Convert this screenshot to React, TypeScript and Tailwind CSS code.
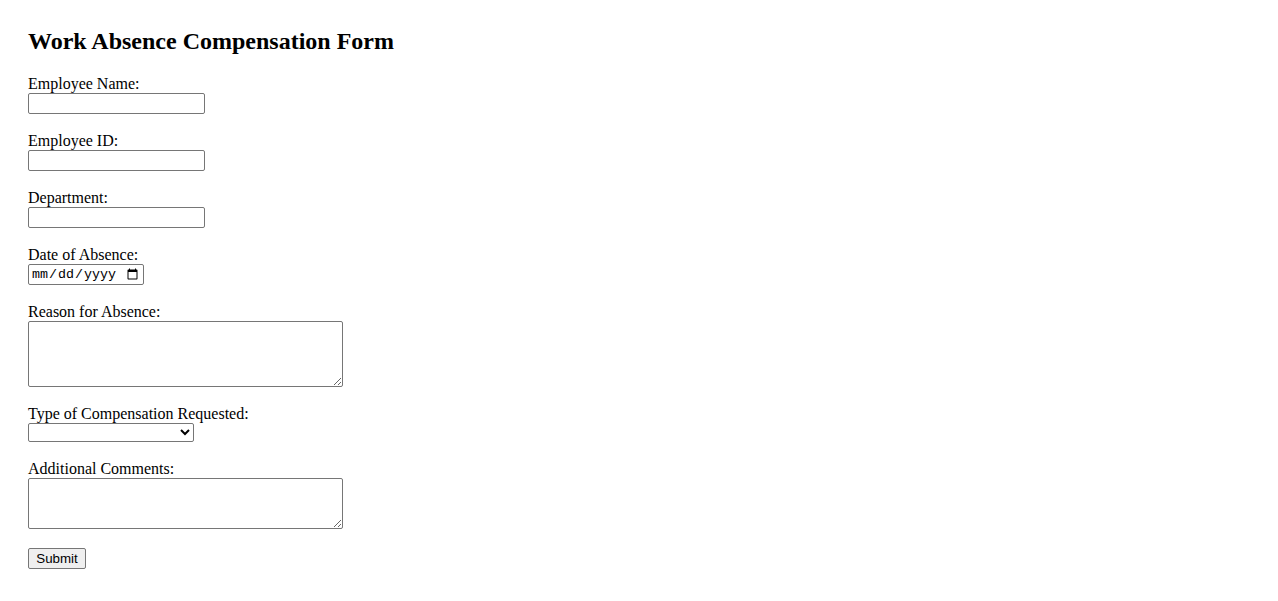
import React from "react";

const fieldBox =
  "block border border-[#767676] rounded-[2px] bg-white px-[2px] py-[1px] text-[13.33px] font-['Liberation_Sans',Arial,sans-serif] text-black outline-none";

function Field({ label, children }: { label: string; children: React.ReactNode }) {
  return (
    <div className="flex flex-col items-start">
      <label className="block h-[17px] leading-[16px] text-[16px]">{label}</label>
      {children}
    </div>
  );
}

export default function App() {
  return (
    <div className="min-h-screen bg-white text-black font-['Liberation_Serif','Times_New_Roman',serif] px-[28px] pt-[27px] pb-8">
      <h2 className="text-[24px] font-bold leading-[28px]">Work Absence Compensation Form</h2>
      <form className="mt-[21px] flex flex-col gap-[19px]" onSubmit={(e) => e.preventDefault()}>
        <Field label="Employee Name:">
          <input type="text" className={`${fieldBox} w-[177px] h-[21px]`} />
        </Field>
        <Field label="Employee ID:">
          <input type="text" className={`${fieldBox} w-[177px] h-[21px]`} />
        </Field>
        <Field label="Department:">
          <input type="text" className={`${fieldBox} w-[177px] h-[21px]`} />
        </Field>
        <Field label="Date of Absence:">
          <input
            type="date"
            className="block w-[116px] h-[21px] border border-[#767676] rounded-[2px] bg-white px-[2px] py-[1px] text-[13.33px] font-['Liberation_Mono',monospace] text-black outline-none"
          />
        </Field>
        <Field label="Reason for Absence:">
          <textarea className={`${fieldBox} w-[315px] h-[66px]`} />
        </Field>
        <Field label="Type of Compensation Requested:">
          <select className={`${fieldBox} w-[166px] h-[19px] py-0`} defaultValue="">
            <option value=""></option>
            <option value="paid">Paid Leave</option>
            <option value="unpaid">Unpaid Leave</option>
          </select>
        </Field>
        <Field label="Additional Comments:">
          <textarea className={`${fieldBox} w-[315px] h-[51px]`} />
        </Field>
        <div className="flex">
          <button
            type="submit"
            className="block w-[58px] h-[21px] border border-[#767676] rounded-[2px] bg-[#efefef] text-[13.33px] leading-none font-['Liberation_Sans',Arial,sans-serif] text-black"
          >
            Submit
          </button>
        </div>
      </form>
    </div>
  );
}
